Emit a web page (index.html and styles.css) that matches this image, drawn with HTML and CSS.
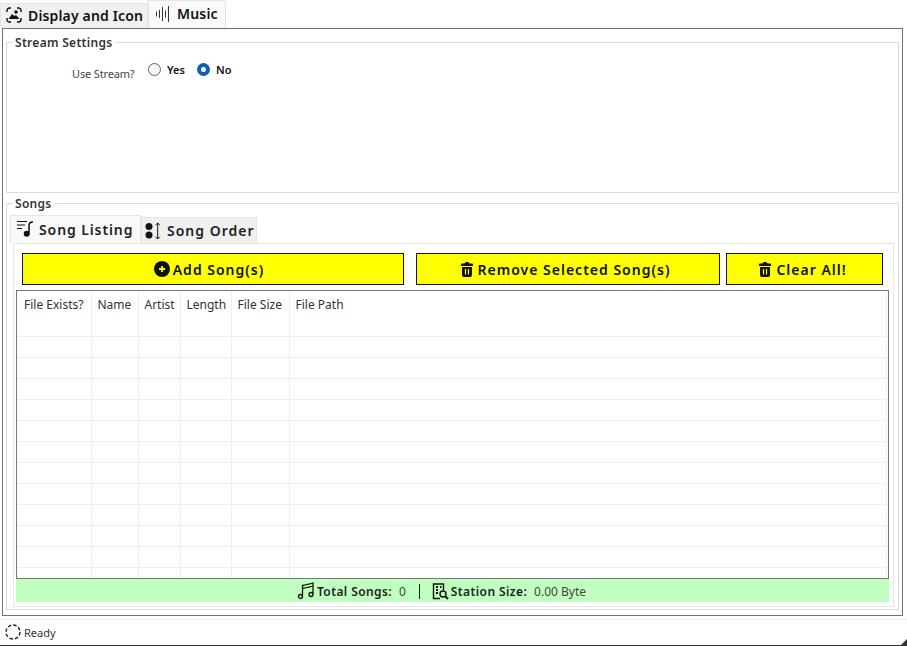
FILE: index.html
```html
<!DOCTYPE html>
<html lang="en">
<head>
    <meta charset="UTF-8">
    <title>Station Editor - Music</title>
    <link rel="stylesheet" href="styles.css">
</head>
<body>
<div class="app">

    <div class="main-tabs">
        <div class="main-tab">
            <svg class="icon" width="16" height="16" viewBox="0 0 16 16" fill="none" stroke="#111" stroke-width="1.4">
                <path d="M1 5V3.500A2.500 2.500 0 0 1 3.500 1H5M11 1h1.500A2.500 2.500 0 0 1 15 3.500V5M15 11v1.500a2.500 2.500 0 0 1-2.500 2.500H11M5 15H3.500A2.500 2.500 0 0 1 1 12.500V11"/>
                <path d="M2.500 12l3.500-5 2.500 2 1.500-1 3.500 4z" fill="#111" stroke="none"/>
                <circle cx="10" cy="5" r="1.800" fill="#111" stroke="none"/>
            </svg>
            Display and Icon
        </div>
        <div class="main-tab active">
            <svg class="icon" width="16" height="16" viewBox="0 0 16 16" stroke="#333" stroke-width="1">
                <path d="M1.500 5.500v5M4.500 4v8M7.500 1v14M10.500 4.500v7M13.500 0v16"/>
            </svg>
            Music
        </div>
    </div>

    <div class="main-pane">
        <fieldset class="group stream-group">
            <legend>Stream Settings</legend>
            <div class="stream-row">
                <span class="stream-label">Use Stream?</span>
                <label class="radio-item"><span class="radio"></span>Yes</label>
                <label class="radio-item"><span class="radio checked"></span>No</label>
            </div>
        </fieldset>

        <fieldset class="group songs-group">
            <legend>Songs</legend>
            <div class="song-tabs">
                <div class="song-tab active">
                    <svg class="icon" width="18" height="18" viewBox="0 0 18 18" fill="none" stroke="#111" stroke-width="1.200">
                        <path d="M1 .5h10M1 4h8M1 7.500h5"/>
                        <path d="M13 12.500V4.500C13 2.500 14.500 1 17 1" stroke-width="1.500"/>
                        <circle cx="10.700" cy="12.700" r="3" fill="#111" stroke="none"/>
                    </svg>
                    Song Listing
                </div>
                <div class="song-tab">
                    <svg class="icon" width="18" height="18" viewBox="0 0 18 18" fill="none" stroke="#111" stroke-width="1">
                        <circle cx="4" cy="4.500" r="3.500" fill="#111" stroke="none"/>
                        <circle cx="4" cy="13" r="3.500" fill="#111" stroke="none"/>
                        <path d="M12.700 1v16M10.500 3.200L12.700 1l2.200 2.200M10.500 14.800l2.200 2.200 2.200-2.200"/>
                    </svg>
                    Song Order
                </div>
            </div>

            <div class="song-pane">
                <div class="button-row">
                    <button class="action-btn add-btn">
                        <svg class="icon" width="16" height="16" viewBox="0 0 16 16">
                            <circle cx="8" cy="8" r="8" fill="#111"/>
                            <path d="M8 5v6M5 8h6" stroke="#ff0" stroke-width="1.800"/>
                        </svg>
                        Add Song(s)
                    </button>
                    <button class="action-btn remove-btn">
                        <svg class="icon" width="12" height="16" viewBox="0 0 12 16">
                            <path d="M3.500 2.500C3.500 .5 8.500 .5 8.500 2.500H11a1 1 0 0 1 1 1V5H0V3.500a1 1 0 0 1 1-1zM1 6h10v8a2 2 0 0 1-2 2H3a2 2 0 0 1-2-2z" fill="#111"/>
                            <path d="M4.500 8v5.500M7.500 8v5.500" stroke="#ff0" stroke-width="1.200"/>
                        </svg>
                        Remove Selected Song(s)
                    </button>
                    <button class="action-btn clear-btn">
                        <svg class="icon" width="12" height="16" viewBox="0 0 12 16">
                            <path d="M3.500 2.500C3.500 .5 8.500 .5 8.500 2.500H11a1 1 0 0 1 1 1V5H0V3.500a1 1 0 0 1 1-1zM1 6h10v8a2 2 0 0 1-2 2H3a2 2 0 0 1-2-2z" fill="#111"/>
                            <path d="M4.500 8v5.500M7.500 8v5.500" stroke="#ff0" stroke-width="1.200"/>
                        </svg>
                        Clear All!
                    </button>
                </div>

                <div class="table-wrap">
                    <table class="song-table">
                        <thead>
                            <tr>
                                <th class="col-exists">File Exists?</th>
                                <th class="col-name">Name</th>
                                <th class="col-artist">Artist</th>
                                <th class="col-length">Length</th>
                                <th class="col-size">File Size</th>
                                <th>File Path</th>
                            </tr>
                        </thead>
                        <tbody>
                            <tr><td></td><td></td><td></td><td></td><td></td><td></td></tr>
                            <tr><td></td><td></td><td></td><td></td><td></td><td></td></tr>
                            <tr><td></td><td></td><td></td><td></td><td></td><td></td></tr>
                            <tr><td></td><td></td><td></td><td></td><td></td><td></td></tr>
                            <tr><td></td><td></td><td></td><td></td><td></td><td></td></tr>
                            <tr><td></td><td></td><td></td><td></td><td></td><td></td></tr>
                            <tr><td></td><td></td><td></td><td></td><td></td><td></td></tr>
                            <tr><td></td><td></td><td></td><td></td><td></td><td></td></tr>
                            <tr><td></td><td></td><td></td><td></td><td></td><td></td></tr>
                            <tr><td></td><td></td><td></td><td></td><td></td><td></td></tr>
                            <tr><td></td><td></td><td></td><td></td><td></td><td></td></tr>
                            <tr><td></td><td></td><td></td><td></td><td></td><td></td></tr>
                            <tr><td></td><td></td><td></td><td></td><td></td><td></td></tr>
                        </tbody>
                    </table>
                </div>

                <div class="totals-bar">
                    <svg class="icon" width="18" height="18" viewBox="0 0 18 18" fill="none" stroke="#111" stroke-width="1.300">
                        <path d="M5.500 14.500V3.500C9 2.800 13 2 16 1v11M5.500 6.500C9 5.800 13 5 16 4"/>
                        <circle cx="3.500" cy="14.500" r="2"/>
                        <circle cx="14" cy="12.500" r="2"/>
                    </svg>
                    <b class="total-label">Total Songs:</b>
                    <span class="total-value">0</span>
                    <span class="total-sep"></span>
                    <svg class="icon" width="17" height="17" viewBox="0 0 17 17" fill="none" stroke="#111" stroke-width="1.400">
                        <path d="M8 15.500H1.500V1h10v6"/>
                        <path d="M4 4h2M8 4h1.500M4 7h2M4 10h2" stroke-width="1.800"/>
                        <circle cx="11" cy="11" r="3"/>
                        <path d="M13 13l3 3" stroke-width="2"/>
                    </svg>
                    <b class="total-label">Station Size:</b>
                    <span class="total-value">0.00 Byte</span>
                </div>
            </div>
        </fieldset>
    </div>

    <div class="status-bar">
        <svg class="icon" width="16" height="16" viewBox="0 0 16 16" fill="none" stroke="#222" stroke-width="1.400">
            <circle cx="8" cy="8" r="7" stroke-dasharray="3.500 2"/>
        </svg>
        Ready
        <span class="grip"></span>
    </div>

</div>
</body>
</html>
```

FILE: styles.css
```css
* {
    box-sizing: border-box;
}

body {
    margin: 0;
    background-color: #fff;
    color: #111;
    font-family: "Noto Sans", "Open Sans", sans-serif;
    font-size: 12px;
    overflow: hidden;
}

.app {
    display: flex;
    flex-direction: column;
    width: 907px;
    height: 646px;
    border-bottom: 1px solid #333;
}

.icon {
    flex: none;
}

/* top tabs */
.main-tabs {
    display: flex;
    align-items: flex-end;
    height: 28px;
}

.main-tab {
    display: flex;
    align-items: center;
    gap: 6px;
    height: 25px;
    padding: 0 0 2px 5px;
    width: 148px;
    background-color: #f0f0f0;
    border: 1px solid #e6e6e6;
    border-bottom: none;
    font-size: 14px;
    font-weight: 600;
    letter-spacing: 0.15px;
}

.main-tab.active {
    width: 78px;
    height: 28px;
    padding-left: 6px;
    background-color: #f9f9f9;
    letter-spacing: 0.2px;
}

.main-pane {
    display: flex;
    flex-direction: column;
    gap: 1px;
    width: 901px;
    height: 588px;
    margin-left: 2px;
    padding: 4px 3px 5px;
    border: 1px solid #707070;
}

/* group boxes */
.group {
    margin: 0;
    min-width: 0;
    padding: 0;
    border: 1px solid #dcdcdc;
}

.group legend {
    margin-left: 6px;
    padding: 2px 2px 0;
    font-size: 12px;
    font-weight: 600;
    letter-spacing: 0.3px;
    line-height: 16px;
    color: #333;
}

.stream-group {
    height: 160px;
}

.stream-row {
    display: flex;
    align-items: center;
    padding: 6px 0 0 65px;
}

.stream-label {
    width: 76px;
    margin-top: 9px;
    font-size: 11px;
    letter-spacing: -0.15px;
    color: #444;
}

.radio-item {
    display: flex;
    align-items: center;
    gap: 6px;
    width: 49px;
    font-size: 11px;
    font-weight: 600;
}

.radio {
    width: 13px;
    height: 13px;
    border: 1px solid #666;
    border-radius: 50%;
    background-color: #f8f8f8;
}

.radio.checked {
    border: 4px solid #0a5fb8;
    background-color: #fff;
}

.songs-group {
    flex: 1;
    min-height: 0;
}

/* inner tabs */
.song-tabs {
    display: flex;
    align-items: flex-end;
    height: 31px;
    padding-left: 3px;
}

.song-tab {
    display: flex;
    align-items: center;
    gap: 4px;
    width: 116px;
    height: 26px;
    padding-left: 3px;
    background-color: #f0f0f0;
    border: 1px solid #e6e6e6;
    border-bottom: none;
    font-size: 14px;
    font-weight: 600;
    letter-spacing: 1px;
    color: #222;
}

.song-tab.active {
    width: 131px;
    height: 28px;
    padding-left: 5px;
    gap: 5px;
    background-color: #f9f9f9;
    letter-spacing: 0.9px;
}

.song-pane {
    display: flex;
    flex-direction: column;
    height: 364px;
    margin: 0 4px 0 6px;
    padding: 9px 4px 4px 2px;
    border: 1px solid #e6e6e6;
}

.button-row {
    display: flex;
    gap: 6px;
    padding: 0 6px;
}

.action-btn {
    display: flex;
    align-items: center;
    justify-content: center;
    gap: 5px;
    height: 32px;
    padding: 0 5px 0 0;
    background-color: #ff0;
    border: 1px solid #111;
    font-family: inherit;
    font-size: 14px;
    font-weight: 600;
    letter-spacing: 1px;
    color: #111;
}

.add-btn {
    width: 382px;
    margin-right: 6px;
    padding-right: 8px;
    gap: 3px;
}

.remove-btn {
    width: 304px;
}

.clear-btn {
    width: 157px;
    padding-right: 3px;
}

/* song table */
.table-wrap {
    height: 289px;
    margin-top: 5px;
    border: 1px solid #777;
    overflow: hidden;
}

.song-table {
    width: 870px;
    border-collapse: collapse;
    table-layout: fixed;
    font-size: 12px;
    color: #333;
}

.song-table th {
    height: 24px;
    padding: 3px 0 0 6px;
    font-weight: 400;
    text-align: left;
    border-right: 1px solid #eee;
}

.song-table th.col-exists {
    padding-left: 7px;
}

.song-table td {
    height: 21px;
    border-right: 1px solid #eee;
    border-bottom: 1px solid #eee;
}

.col-exists {
    width: 74px;
}

.col-name {
    width: 47px;
}

.col-artist {
    width: 42px;
}

.col-length {
    width: 51px;
}

.col-size {
    width: 58px;
}

/* totals */
.totals-bar {
    display: flex;
    align-items: center;
    justify-content: center;
    height: 23px;
    padding: 1px 22px 0 0;
    background-color: #c0ffc0;
    font-size: 12px;
}

.total-label {
    margin-left: 2px;
    font-weight: 600;
    letter-spacing: 0.4px;
    color: #222;
}

.total-value {
    margin-left: 7px;
    color: #444;
}

.total-sep {
    width: 1px;
    height: 15px;
    margin: 0 12px 0 13px;
    background-color: #111;
}

/* status bar */
.status-bar {
    flex: 1;
    position: relative;
    display: flex;
    align-items: center;
    gap: 3px;
    padding: 3px 0 0 5px;
    font-size: 11px;
    color: #333;
}

.status-bar::before {
    content: "";
    position: absolute;
    top: 3px;
    left: 0;
    right: 0;
    border-top: 1px solid #eee;
}

.grip {
    position: absolute;
    right: 0;
    bottom: 0;
    border-style: solid;
    border-width: 0 0 6px 6px;
    border-color: transparent transparent #333 transparent;
}
```
